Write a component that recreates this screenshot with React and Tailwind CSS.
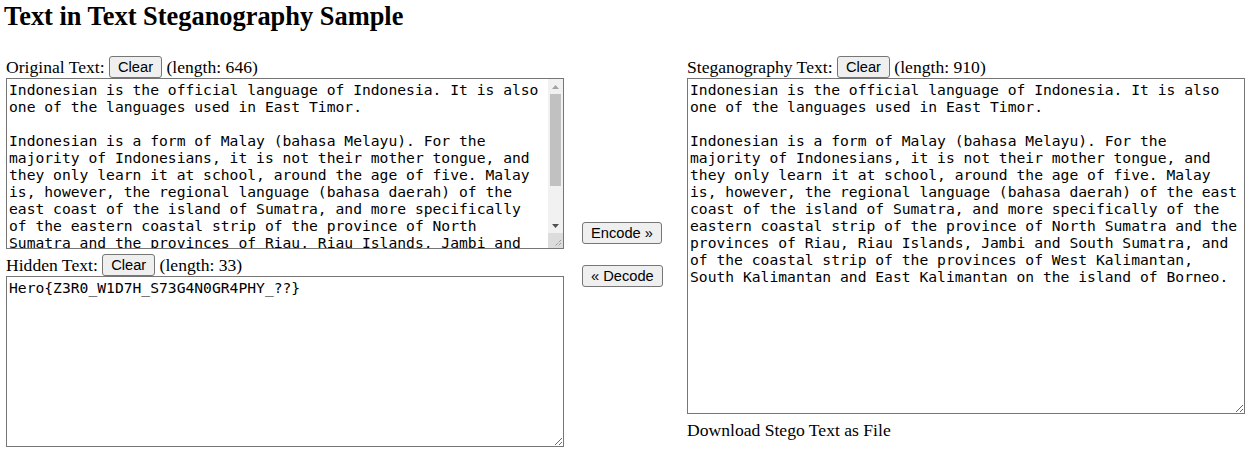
import React from "react";

const ORIGINAL = `Indonesian is the official language of Indonesia. It is also one of the languages used in East Timor.

Indonesian is a form of Malay (bahasa Melayu). For the majority of Indonesians, it is not their mother tongue, and they only learn it at school, around the age of five. Malay is, however, the regional language (bahasa daerah) of the east coast of the island of Sumatra, and more specifically of the eastern coastal strip of the province of North Sumatra and the provinces of Riau, Riau Islands, Jambi and South Sumatra, and of the coastal strip of the provinces of West Kalimantan, South Kalimantan and East Kalimantan on the island of Borneo.`;

const HIDDEN = "Hero{Z3R0_W1D7H_S73G4N0GR4PHY_??}";

function Btn({ children }) {
  return (
    <button className="bg-[#efefef] border border-[#767676] rounded-[3px] px-[8px] h-[22px] text-[14.667px] leading-[17px] text-black font-['Liberation_Sans',Arial,sans-serif] whitespace-pre">
      {children}
    </button>
  );
}

function Label({ name, length }) {
  return (
    <div className="flex items-center h-[22px] whitespace-pre text-[17.6px] leading-[20px]">
      <span>{name}: </span>
      <Btn>Clear</Btn>
      <span> (length: {length})</span>
    </div>
  );
}

const monoCls =
  "bg-white p-[2px] text-[14.667px] leading-[17px] text-black font-['DejaVu_Sans_Mono',monospace]";

const taCls = "block w-[558px] border border-[#767676] resize " + monoCls;

function Grip() {
  return (
    <svg width="15" height="15" viewBox="0 0 15 15" className="block">
      <path d="M13 7 L7 13 M13 10 L10 13" stroke="#808080" strokeWidth="1" strokeDasharray="1 1" />
    </svg>
  );
}

function ScrollTextarea({ value }) {
  return (
    <div className="flex w-[558px] h-[171px] border border-[#767676] bg-white">
      <textarea
        className={"flex-1 min-w-0 h-full overflow-hidden resize-none [scrollbar-width:none] " + monoCls}
        defaultValue={value}
      />
      <div className="w-[15px] h-full flex flex-col bg-[#f1f1f1]">
        <div className="h-[15px] flex items-center justify-center">
          <svg width="7" height="4" viewBox="0 0 7 4">
            <path d="M0 4 L3.5 0 L7 4 Z" fill="#a3a3a3" />
          </svg>
        </div>
        <div className="flex-1 flex flex-col px-[2px]">
          <div className="h-[92px] bg-[#c1c1c1]" />
        </div>
        <div className="h-[15px] flex items-center justify-center">
          <svg width="7" height="4" viewBox="0 0 7 4">
            <path d="M0 0 L7 0 L3.5 4 Z" fill="#505050" />
          </svg>
        </div>
        <div className="h-[15px] bg-[#dcdcdc]">
          <Grip />
        </div>
      </div>
    </div>
  );
}

export default function App() {
  return (
    <div className="bg-white text-black font-['Liberation_Serif','Times_New_Roman',serif] w-[1251px] h-[454px] overflow-hidden">
      <h1 className="text-[26.4px] font-bold leading-[31px] pl-[4px] pt-[1px]">
        Text in Text Steganography Sample
      </h1>
      <div className="flex mt-[24px] pl-[6px]">
        <div className="flex flex-col w-[558px]">
          <Label name="Original Text" length={646} />
          <ScrollTextarea value={ORIGINAL} />
          <div className="mt-[5px]">
            <Label name="Hidden Text" length={33} />
          </div>
          <textarea className={taCls + " h-[171px]"} defaultValue={HIDDEN} />
        </div>
        <div className="w-[123px] flex flex-col items-start pl-[18px] pt-[166px] gap-[21px]">
          <Btn>Encode »</Btn>
          <Btn>« Decode</Btn>
        </div>
        <div className="flex flex-col w-[558px]">
          <Label name="Steganography Text" length={910} />
          <textarea
            className={taCls + " h-[336px] w-[557px]"}
            defaultValue={ORIGINAL}
          />
          <div className="text-[17.6px] leading-[20px] mt-[6px]">
            Download Stego Text as File
          </div>
        </div>
      </div>
    </div>
  );
}
